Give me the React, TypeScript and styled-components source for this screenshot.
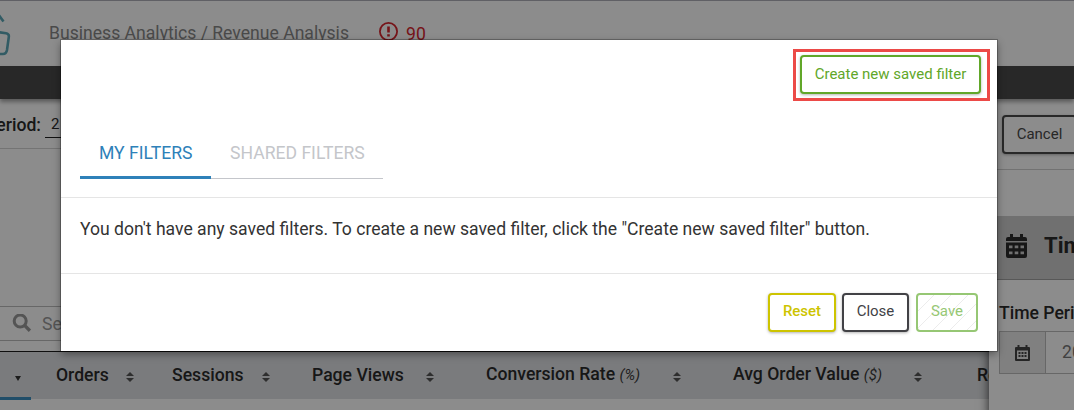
import React from 'react';
import styled, { createGlobalStyle, css } from 'styled-components';

const GlobalStyle = createGlobalStyle`
  * { box-sizing: border-box; }
  body {
    margin: 0;
    overflow: hidden;
    font-family: Roboto, sans-serif;
    font-size: 17.6px;
    color: #2b2b2b;
    background: #fff;
  }
  button { font-family: inherit; }
  svg { flex-shrink: 0; }
`;

const Page = styled.div`
  position: relative;
  width: 1074px;
  height: 410px;
  overflow: hidden;
  background: #fff;
`;

const TopBar = styled.header`
  display: flex;
  align-items: flex-start;
  height: 66px;
  border-top: 1px solid #b0b0b8;
`;

const LogoSlot = styled.div`
  width: 49px;
  height: 60px;
`;

const Breadcrumb = styled.div`
  width: 329px;
  padding-top: 20px;
  font-size: 17.6px;
  line-height: 24px;
  color: #888;
`;

const Alert = styled.div`
  display: flex;
  padding-top: 20px;
  gap: 7px;
  font-size: 17.6px;
  line-height: 26px;
  color: #d8262f;
`;

const NavBar = styled.nav`
  position: relative;
  z-index: 2;
  height: 33px;
  background: #494949;
  box-shadow: 0 3px 4px rgba(0, 0, 0, 0.35);
`;

const PeriodBar = styled.div`
  display: flex;
  height: 50px;
  padding-top: 15px;
  border-bottom: 1px solid #d4d4d4;
`;

const PeriodLabel = styled.strong`
  display: flex;
  flex: 0 0 45px;
  min-width: 0;
  justify-content: flex-end;
  padding-right: 4px;
  font-size: 17.6px;
  font-weight: 500;
  line-height: 22px;
  white-space: nowrap;
`;

const PeriodValue = styled.div`
  width: 120px;
  height: 24px;
  padding-left: 6px;
  border-bottom: 1px solid #222;
  font-size: 15px;
  line-height: 21px;
`;

const SearchBar = styled.div`
  display: flex;
  align-items: center;
  gap: 10px;
  height: 35px;
  margin-top: 157px;
  padding-left: 12px;
  border: solid #bcbcbc;
  border-width: 1px 0;
  font-size: 17.6px;
  color: #999;
`;

const TableHead = styled.div`
  display: flex;
  height: 48px;
  margin-top: 10px;
  border-top: 1px solid #1c1c1c;
  background: #dfe1e4;
`;

const FirstColumn = styled.div`
  flex: 0 0 31px;
  height: 48px;
  padding: 24px 0 0 15px;
  border-bottom: 3px solid #3d8fc0;
`;

const Column = styled.div<{ $width: number }>`
  flex: 0 0 ${(p) => p.$width}px;
  display: flex;
  align-items: center;
  padding-left: 25px;
`;

const ColumnLabel = styled.span<{ $width: number }>`
  width: ${(p) => p.$width}px;
  padding-bottom: 2px;
  font-size: 17.6px;
  font-weight: 500;
  line-height: 22px;
  white-space: nowrap;
`;

const Unit = styled.i`
  font-size: 15px;
  font-weight: 400;
  color: #3a3a3a;
`;

const Drawer = styled.aside`
  position: absolute;
  z-index: 1;
  top: 99px;
  right: 0;
  width: 85px;
  height: 311px;
  overflow: hidden;
  background: #fff;
`;

const DrawerShade = styled.div`
  position: absolute;
  top: 99px;
  right: 0;
  width: 85px;
  height: 320px;
  box-shadow: 0 0 10px rgba(0, 0, 0, 0.75);
`;

const DrawerActions = styled.div`
  height: 71px;
  padding: 16px 0 0 13px;
  border-bottom: 1px solid #cfcfcf;
`;

const DrawerTitle = styled.div`
  display: flex;
  align-items: center;
  gap: 17px;
  height: 64px;
  margin-top: 46px;
  padding: 0 0 4px 17px;
  border-bottom: 1px solid #a0a0a0;
  background: #cdcdcd;
  font-size: 22px;
  font-weight: 700;
  white-space: nowrap;
`;

const FieldLabel = styled.div`
  padding: 22px 0 0 10px;
  font-size: 17.6px;
  font-weight: 500;
  line-height: 22px;
  white-space: nowrap;
`;

const DateField = styled.div`
  display: flex;
  width: 200px;
  height: 43px;
  margin: 7px 0 0 10px;
  border: 1px solid #bcbcbc;
  font-size: 17.6px;
  line-height: 41px;
  color: #777;
`;

const DateAddon = styled.span`
  display: flex;
  align-items: center;
  justify-content: center;
  width: 46px;
  border-right: 1px solid #bcbcbc;
  background: #eaeaea;
`;

const DateValue = styled.span`
  padding-left: 16px;
`;

const Backdrop = styled.div`
  position: absolute;
  z-index: 3;
  inset: 0;
  padding: 40px 0 0 61px;
  background: rgba(0, 0, 0, 0.45);
`;

const Dialog = styled.section`
  width: 936px;
  height: 311px;
  background: #fff;
  box-shadow: 0 0 0 1px rgba(0, 0, 0, 0.25), 0 3px 8px rgba(0, 0, 0, 0.4);
`;

const DialogHeader = styled.header`
  height: 158px;
  border-bottom: 1px solid #e5e5e5;
`;

const HeaderActions = styled.div`
  display: flex;
  justify-content: flex-end;
  height: 89px;
  padding: 9px 7px 0 0;
`;

const Highlight = styled.div`
  width: 197px;
  height: 52px;
  padding: 3px 0 0 4px;
  border: 3px solid #ec4a47;
`;

const tones = {
  green: '#61a729',
  yellow: '#cdc400',
  dark: '#424246',
  plain: '#494949',
  pale: '#96c774',
};

const Button = styled.button<{ $tone: keyof typeof tones; $width: number }>`
  display: block;
  width: ${(p) => p.$width}px;
  height: 39px;
  padding: 0 0 ${(p) => (p.$tone === 'green' || p.$tone === 'plain' ? 2 : 3)}px;
  border: 2px solid ${(p) => tones[p.$tone]};
  border-radius: 4px;
  background: #fff;
  box-shadow: 0 1px 3px rgba(0, 0, 0, 0.3);
  color: ${(p) => tones[p.$tone]};
  font-size: 15px;
  line-height: 20px;
  white-space: nowrap;
  ${(p) => p.$tone === 'yellow' && css`font-weight: 500;`}
  ${(p) => p.$tone === 'pale' && css`
    margin-left: 1px;
    box-shadow: none;
    background: repeating-linear-gradient(135deg, #fff 0 11px, #ececec 11px 12px);
  `}
`;

const Tabs = styled.div`
  display: flex;
  width: 303px;
  height: 50px;
  margin-left: 19px;
  border-bottom: 1px solid #c4c6cb;
`;

const Tab = styled.div<{ $active?: boolean }>`
  height: 50px;
  width: ${(p) => (p.$active ? 131 : 172)}px;
  padding: 13px 0 0 19px;
  border-bottom: ${(p) => (p.$active ? '3px solid #2e81b9' : 'none')};
  color: ${(p) => (p.$active ? '#2e81b9' : '#c4c6ca')};
  font-size: 17.6px;
  line-height: 22px;
  white-space: nowrap;
`;

const DialogBody = styled.div`
  height: 76px;
  padding: 20px 19px 0;
  border-bottom: 1px solid #e5e5e5;
  font-size: 17.57px;
  color: #333;
  line-height: 22px;
  white-space: nowrap;
`;

const DialogFooter = styled.footer`
  display: flex;
  justify-content: flex-end;
  gap: 6px;
  padding: 19px 19px 0 0;
`;

const SortSvg = styled.svg`
  margin-top: 2px;
  fill: #555;
`;

const SortIcon = () => (
  <SortSvg width="8" height="10" viewBox="0 0 8 10">
    <path d="M0 4 4 0l4 4zM0 6h8L4 10z" />
  </SortSvg>
);

const columns = [
  { label: 'Orders', width: 116, labelWidth: 70 },
  { label: 'Sessions', width: 140, labelWidth: 90 },
  { label: 'Page Views', width: 174, labelWidth: 114 },
  { label: 'Conversion Rate', unit: '(%)', width: 247, labelWidth: 187 },
  { label: 'Avg Order Value', unit: '($)', width: 244, labelWidth: 181 },
];

export default function App() {
  return (
    <>
      <GlobalStyle />
      <Page>
        <TopBar>
          <LogoSlot>
            <svg width="14" height="60" viewBox="0 0 14 60" fill="none" stroke="#5ba7b7" strokeWidth="2.6">
              <path d="M-2 13 3.5 20.5M-1 31.2 6 32.2Q9.3 32.8 8.8 36L7 49Q6.3 53 3 53H-2" />
            </svg>
          </LogoSlot>
          <Breadcrumb>Business Analytics / Revenue Analysis</Breadcrumb>
          <Alert>
            <svg width="21" height="21" viewBox="0 0 21 21" fill="none" stroke="#d8262f">
              <circle cx="10.5" cy="10.5" r="8.6" strokeWidth="1.8" />
              <path d="M10.5 5.5v6M10.5 13.2v2.3" strokeWidth="2.6" />
            </svg>
            90
          </Alert>
        </TopBar>
        <NavBar />
        <PeriodBar>
          <PeriodLabel>Period:</PeriodLabel>
          <PeriodValue>2</PeriodValue>
        </PeriodBar>
        <SearchBar>
          <svg width="20" height="20" viewBox="0 0 20 20" fill="none" stroke="#999" strokeWidth="3">
            <circle cx="8.2" cy="7" r="6" />
            <path d="m12.6 11.4 5.3 5.3" strokeWidth="3.4" />
          </svg>
          Search
        </SearchBar>
        <TableHead>
          <FirstColumn>
            <svg width="6" height="5" viewBox="0 0 6 5" fill="#333" display="block">
              <path d="M0 0h6L3 5z" />
            </svg>
          </FirstColumn>
          {columns.map((c) => (
            <Column key={c.label} $width={c.width}>
              <ColumnLabel $width={c.labelWidth}>
                {c.label} {c.unit && <Unit>{c.unit}</Unit>}
              </ColumnLabel>
              <SortIcon />
            </Column>
          ))}
          <Column $width={200}>
            <ColumnLabel $width={100}>Revenue</ColumnLabel>
          </Column>
        </TableHead>
        <DrawerShade />
        <Drawer>
          <DrawerActions>
            <Button $tone="plain" $width={75}>Cancel</Button>
          </DrawerActions>
          <DrawerTitle>
            <svg width="21" height="24" viewBox="0 0 21 24" fill="#2b2b2b">
              <path
                fillRule="evenodd"
                d="M4 0h3v3h7V0h3v3h2q2 0 2 2v2H0V5q0-2 2-2h2zM0 8.5h21V22q0 2-2 2H2q-2 0-2-2zM3 11.5v2.7h3.5v-2.7zM8.7 11.5v2.7h3.6v-2.7zM14.5 11.5v2.7H18v-2.7zM3 17.5v2.7h3.5v-2.7zM8.7 17.5v2.7h3.6v-2.7zM14.5 17.5v2.7H18v-2.7z"
              />
            </svg>
            Time
          </DrawerTitle>
          <FieldLabel>Time Period</FieldLabel>
          <DateField>
            <DateAddon>
              <svg width="15" height="16" viewBox="0 0 15 16" fill="#444">
                <path
                  fillRule="evenodd"
                  d="M2.5 0h2v2h6V0h2v2H14q1 0 1 1v12q0 1-1 1H1q-1 0-1-1V3q0-1 1-1h1.5zM2 5.5V14h11V5.5z"
                />
                <path d="M3.5 7h2v2h-2zM6.5 7h2v2h-2zM9.5 7h2v2h-2zM3.5 10h2v2h-2zM6.5 10h2v2h-2zM9.5 10h2v2h-2z" />
              </svg>
            </DateAddon>
            <DateValue>2020</DateValue>
          </DateField>
        </Drawer>
        <Backdrop>
          <Dialog>
            <DialogHeader>
              <HeaderActions>
                <Highlight>
                  <Button $tone="green" $width={181}>Create new saved filter</Button>
                </Highlight>
              </HeaderActions>
              <Tabs>
                <Tab $active>MY FILTERS</Tab>
                <Tab>SHARED FILTERS</Tab>
              </Tabs>
            </DialogHeader>
            <DialogBody>
              You don't have any saved filters. To create a new saved filter, click the "Create new saved filter" button.
            </DialogBody>
            <DialogFooter>
              <Button $tone="yellow" $width={68}>Reset</Button>
              <Button $tone="dark" $width={67}>Close</Button>
              <Button $tone="pale" $width={62}>Save</Button>
            </DialogFooter>
          </Dialog>
        </Backdrop>
      </Page>
    </>
  );
}
